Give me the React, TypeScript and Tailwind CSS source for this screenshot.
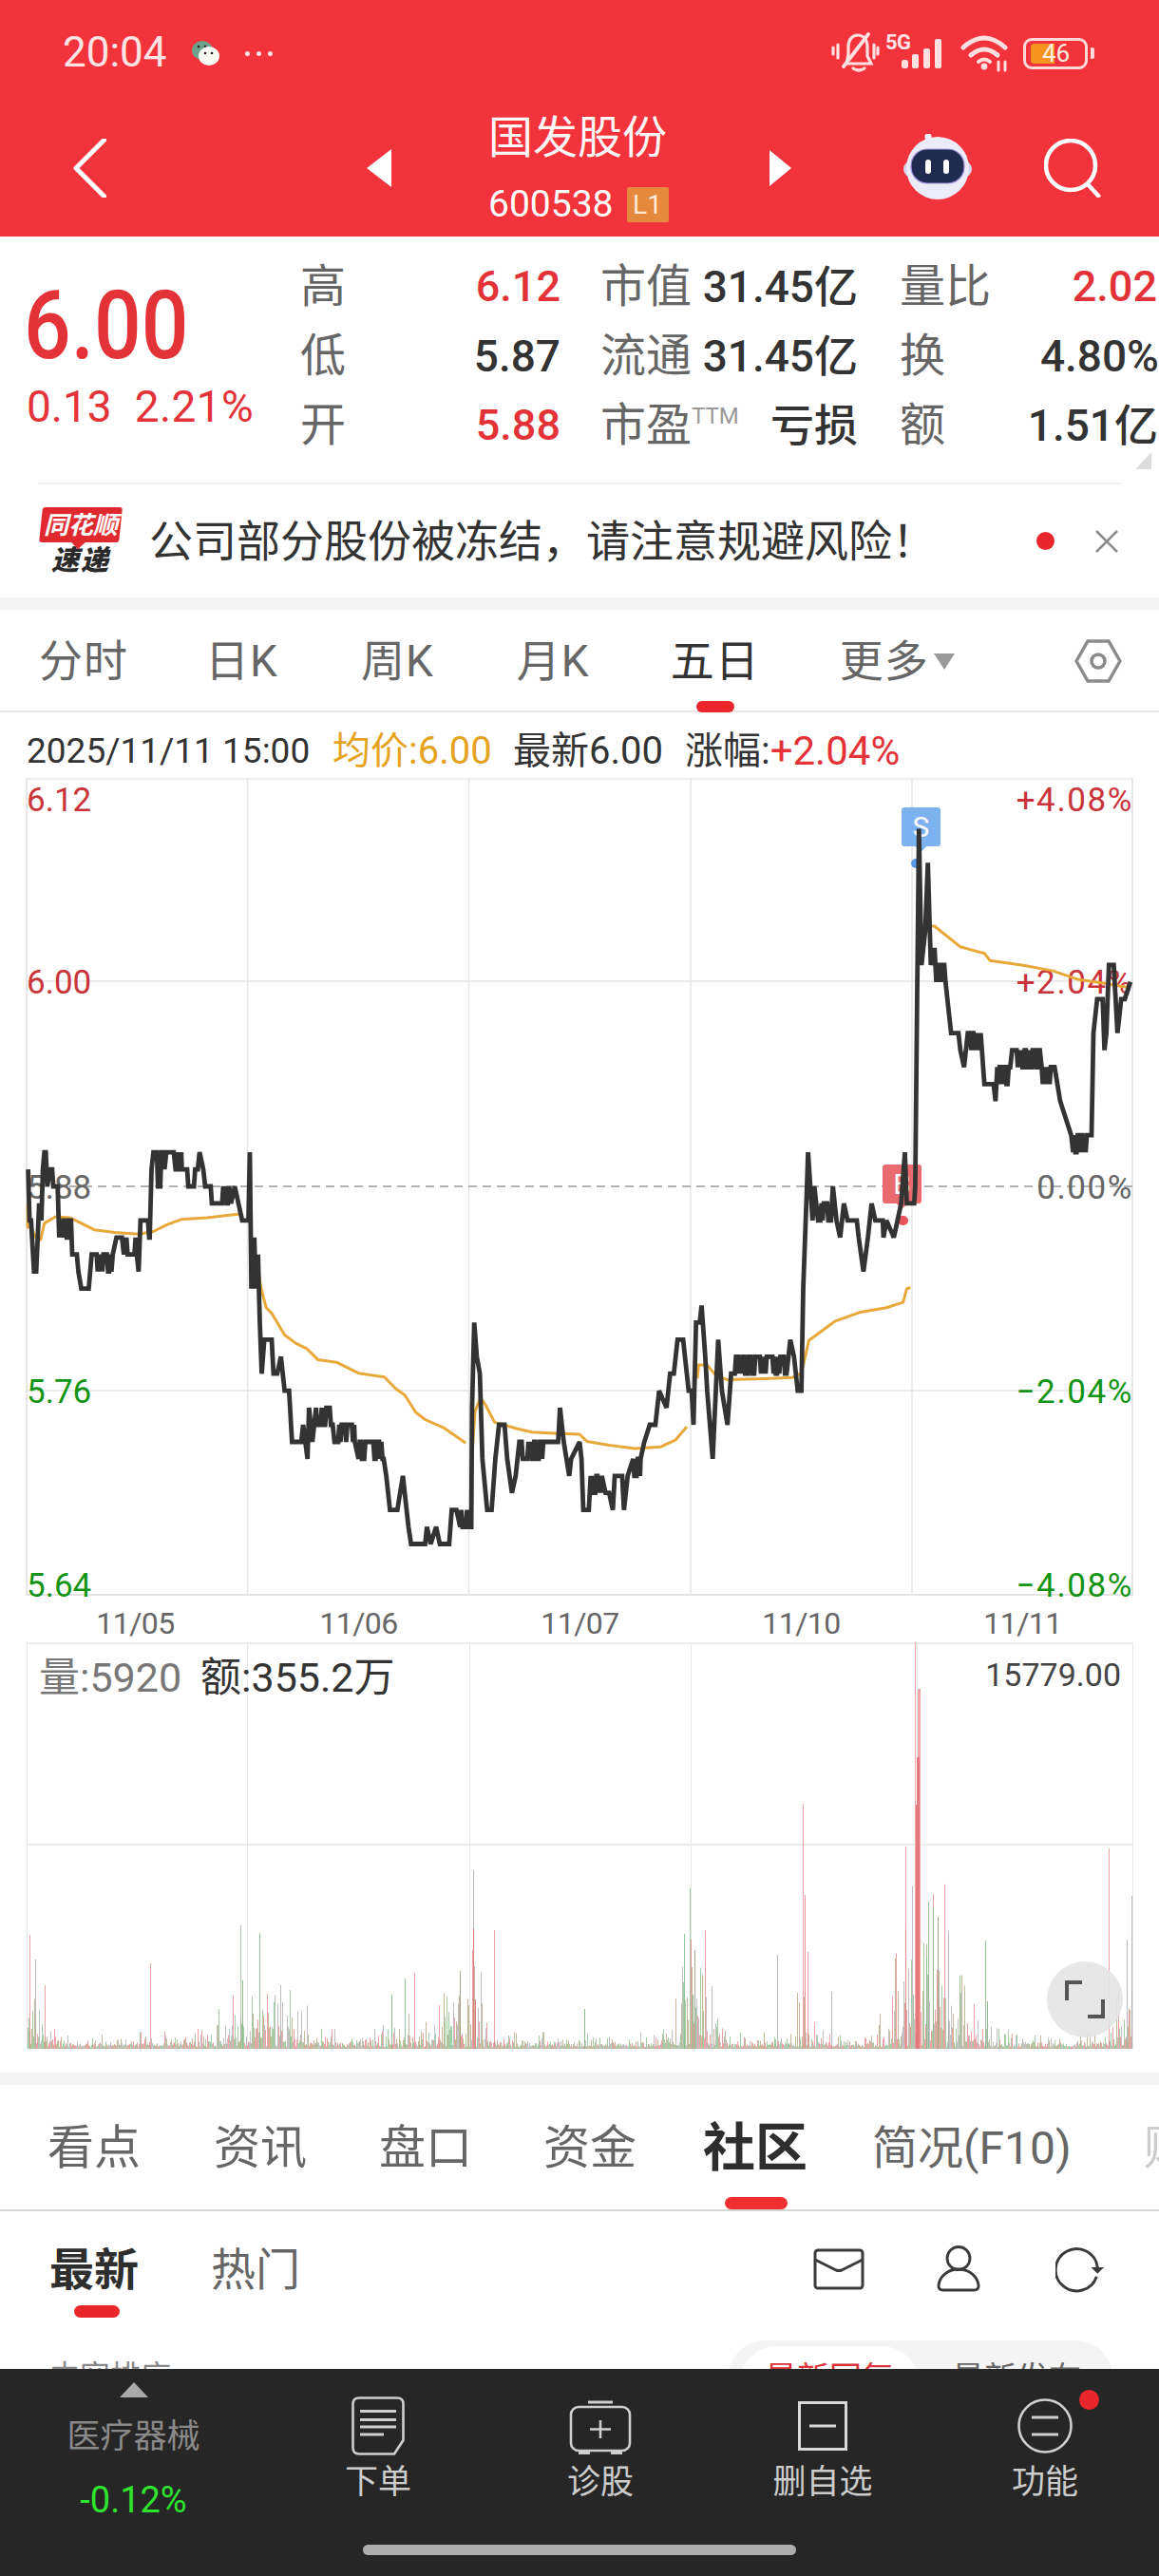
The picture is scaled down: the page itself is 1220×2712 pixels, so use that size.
import React from "react";

const FONT = "[font-family:Roboto,'Noto_Sans_CJK_SC','Noto_Sans',sans-serif]";

type K = [number, number, number?];
const P3: K[] = [
  [76,1],[80,-2],[84,-2],[92,-5],[98,-5],[102,-3],[106,-1],[112,-2],[116,1],[120,2],[124,2],[128,0],[135,1,0],[150,0],[156,0],[160,-3],[165,-2,-3],[186,-2,-4],[200,-4],[208,-4],[212,-5],[220,-6],[240,-6],[248,-4],[252,-4,-5],[305,-4],[315,-3],[330,-3],[335,-4],[342,-3,-4],[370,-4],[375,-5],[380,-2],[385,-2,-3],[405,-3],[410,1],[415,2,0],[445,1],[450,2],[470,2],[475,1,2],[492,1],[500,1,0],[530,1],[535,1],[540,2],[550,1],[555,0],[570,0,-1],[620,0],[625,-1],[635,0],[645,-1],[655,-2],[664,-2],
  [672,-2],[676,2],[680,-6],[688,-3],[692,-6],[698,-4],[703,-8],[708,-11],[715,-9],[735,-9],[740,-11],[750,-11],[760,-10],[770,-12],[782,-12],[790,-15],[805,-15],[815,-15],[820,-14],[832,-16],[836,-13],[845,-15],[855,-13,-14],[900,-14],[905,-15],[915,-15,-14],[960,-15],[970,-16,-15],[1038,-16],[1045,-17],[1055,-19],[1065,-19],[1075,-19],[1090,-17],[1100,-19],[1105,-20],[1112,-21,-21],[1150,-21],[1155,-20],[1165,-21],[1180,-20],[1190,-21],[1215,-21],[1222,-19],[1235,-19],[1245,-20,-19],[1265,-20],
  [1275,-20],[1277,-13],[1283,-8],[1290,-10],[1298,-11],[1305,-16],[1318,-19],[1330,-19],[1340,-16],[1350,-14],[1365,-14],[1372,-16],[1385,-18],[1395,-17],[1405,-15,-16],[1480,-15],[1500,-15],[1510,-15],[1515,-13],[1525,-15],[1540,-17],[1545,-16],
];
const P4: K[] = [
  [0,-15],[5,-16],[10,-19],[25,-19],[30,-17,-18],[60,-17],[70,-18],[80,-18],[90,-19],[95,-17],[115,-17],[120,-19],[130,-17],[145,-16,-17],[165,-16],[175,-15],[190,-14],[205,-14],[215,-12],[235,-13],[245,-11],[255,-11],[265,-9],[280,-9],[295,-12],[303,-12],[308,-14],[315,-8],[325,-8],[330,-7],[340,-10],[345,-12],[360,-16],[375,-9],[385,-12],[400,-14],[410,-11],[420,-11,-10],[560,-11],[570,-9],[580,-10],[590,-12],[600,-12],[605,-6],[615,0],[618,2],[630,-2],[635,0],[645,-2,-1],[680,-2],[685,0],[695,-2],[705,-3],[715,-1],[725,-2],[750,-2],[755,-3],[768,-5],[780,-3],[790,-1],[800,-2],[820,-2],[822,-3],[830,-2],[850,-3],[860,-2],[870,-1],[880,2],[885,-1],[905,-1],[908,0],[913,11],[918,21],[925,13],[935,15],[942,19],[950,13],[960,14],[965,12,13],[990,12],[1000,10],[1005,9],[1025,9],[1030,8],[1040,7],[1050,9,8],[1085,9],[1095,6],[1105,6],[1120,6],[1125,5],[1130,7,6],[1165,7],[1170,8,7],[1245,8],[1250,7,6],[1285,7],[1300,5],[1315,4],[1330,3],[1335,2,3],[1375,3],[1385,3],[1390,9],[1400,11],[1415,11],[1420,8],[1425,9],[1432,13],[1445,13],[1455,9],[1465,11],[1475,11],[1490,12],
];

function mulberry(seed: number) {
  let a = seed;
  return () => {
    a |= 0; a = (a + 0x6d2b79f5) | 0;
    let t = Math.imul(a ^ (a >>> 15), 1 | a);
    t = (t + Math.imul(t ^ (t >>> 7), 61 | t)) ^ t;
    return ((t ^ (t >>> 14)) >>> 0) / 4294967296;
  };
}

function priceLine(): string {
  const r = mulberry(7);
  const keys: K[] = [...P3, ...P4.map(([x, l, a]) => [x + 1568, l, a] as K)];
  const pts: string[] = [];
  const yOf = (l: number) => 1249 - l * 17.93;
  keys.forEach(([zx, l, alt], i) => {
    const x = zx / 2.57;
    pts.push(`${x.toFixed(1)},${yOf(l).toFixed(1)}`);
    if (alt !== undefined && i + 1 < keys.length) {
      const nx = keys[i + 1][0] / 2.57;
      let cx = x + 1.2;
      while (cx < nx - 0.5) {
        const lv = r() < 0.5 ? l : alt;
        pts.push(`${cx.toFixed(1)},${yOf(lv).toFixed(1)}`);
        cx += 1.2;
      }
    }
  });
  return pts.join(" ");
}

const AVG3: number[][][] = [
  [[75,780],[75,822],[85,822],[95,840],[110,845],[120,815],[150,803],[190,805],[220,815],[255,827],[310,832],[375,835],[415,830],[450,818],[490,808],[560,805],[650,798]],
  [[697,895],[705,930],[720,970],[735,980],[770,1020],[800,1035],[830,1045],[860,1065],[910,1070],[970,1090],[1040,1097],[1070,1118],[1095,1130],[1125,1162],[1150,1175],[1200,1190],[1260,1218]],
  [[1278,1230],[1285,1160],[1300,1135],[1315,1150],[1338,1180],[1400,1192],[1440,1198],[1500,1200],[1568,1202],[1588,1215],[1648,1222],[1718,1228],[1788,1225],[1828,1212],[1858,1188]],
  [[1886,1100],[1890,1075],[1913,1075],[1938,1095],[1968,1102],[2068,1100],[2143,1098],[2168,1090],[2188,1030],[2218,1015],[2258,995],[2328,978],[2398,970],[2443,960],[2453,935],[2463,933]],
  [[2486,340],[2493,300],[2508,270],[2528,270],[2598,308],[2663,320],[2678,333],[2768,342],[2848,352],[2918,368],[2988,375],[3058,383]],
];

const SPIKES: [number, number, string, number][] = [
  [963,1729,"#ee8f92",0.8],[967,1778,"#f2a6a8",1],[966,1850,"#e47a7e",1],[965,1900,"#e47a7e",1],[845,1899,"#ee8f92",0.8],[847,1995,"#e47a7e",0.8],[953,1944,"#e47a7e",0.7],[953,2030,"#d98a80",0.9],[1167,1946,"#e47a7e",0.7],[498,1969,"#aaaaaa",0.8],[498,2030,"#e47a7e",0.9],[520,2032,"#e47a7e",0.7],[253,2027,"#9bb89b",0.8],[273,2035,"#8ebc8e",0.9],[31,2037,"#e47a7e",0.7],[37,2063,"#aaaaaa",0.8],[47,2090,"#e47a7e",0.7],[158,2067,"#e47a7e",0.7],[436,2077,"#e47a7e",0.7],[426,2083,"#8ebc8e",0.9],[720,2036,"#8ebc8e",0.9],[731,2053,"#a09f84",0.9],[818,2058,"#aaaaaa",0.8],[850,2055,"#e47a7e",0.7],[977,2002,"#8ebc8e",0.9],[982,2008,"#8ebc8e",0.9],[987,2018,"#a09f84",0.9],[998,2033,"#aaaaaa",0.8],[1037,2043,"#8ebc8e",0.9],[1186,2042,"#aaaaaa",0.8],[1191,1996,"#aaaaaa",0.8],[1039,2107,"#8ebc8e",1],[615,2115,"#8ebc8e",1],[875,2097,"#aaaaaa",0.8],[1010,2080,"#8ebc8e",0.9],[729,2100,"#8ebc8e",1],[975,2060,"#8ebc8e",1],[255,2085,"#8ebc8e",1],[295,2090,"#aaaaaa",0.8],[305,2095,"#8ebc8e",0.8],[412,2100,"#8ebc8e",1],[484,2075,"#a09f84",0.9],[500,2105,"#e47a7e",1],
];

function envelope(x: number): number {
  const bumps: [number, number, number][] = [[30,12,20],[262,26,14],[300,20,12],[420,30,5],[478,16,20],[500,10,18],[725,12,28],[738,12,18],[845,8,14],[966,20,36],[985,20,22],[1010,24,8],[1185,10,14]];
  let e = 4;
  for (const [c, w, h] of bumps) e += h * Math.exp(-((x - c) * (x - c)) / (2 * w * w));
  return e;
}

function volumeBars() {
  const r = mulberry(21);
  const palette = ["#e47a7e", "#7fb67f", "#a6a6a6", "#a89b6e"];
  const bars: React.ReactNode[] = [];
  for (let x = 29; x < 1192; x++) {
    const h = 2 + -Math.log(Math.max(0.02, r())) * envelope(x);
    const c = palette[Math.floor(r() * 4)];
    bars.push(<line key={x} x1={x + 0.5} x2={x + 0.5} y1={2157} y2={2157 - h} stroke={c} strokeWidth={1} strokeOpacity={0.7} />);
  }
  SPIKES.forEach(([x, y, c, o], i) => {
    bars.push(<line key={`s${i}`} x1={x + 0.5} x2={x + 0.5} y1={2157} y2={y} stroke={c} strokeWidth={x >= 964 && x <= 967 ? 3 : 1} strokeOpacity={o} />);
  });
  return bars;
}

function PriceChart() {
  const line = priceLine();
  return (
    <svg className="absolute inset-0 overflow-visible" width={1165} height={861} viewBox="28 819 1165 861">
      {AVG3.map((seg, i) => (
        <polyline key={i} points={seg.map(([x, y]) => `${(x / 2.57).toFixed(1)},${(820 + y / 1.742).toFixed(1)}`).join(" ")} fill="none" stroke="#e8a83a" strokeWidth={3} strokeLinejoin="round" />
      ))}
      <polyline points={line} fill="none" stroke="#333333" strokeWidth={4.8} strokeLinejoin="miter" strokeMiterlimit={2} />
    </svg>
  );
}

function ChartGrid() {
  return (
    <svg className="absolute inset-0 overflow-visible" width={1165} height={861} viewBox="28 819 1165 861">
      {[28, 260.5, 493.5, 727, 960, 1192].map((x) => (
        <line key={x} x1={x} x2={x} y1={819} y2={1680} stroke="#e6e6e6" strokeWidth={x === 28 || x === 1192 ? 2 : 1.5} />
      ))}
      {[1033, 1464].map((y) => (
        <line key={y} x1={28} x2={1193} y1={y} y2={y} stroke="#e4e4e4" strokeWidth={1.5} />
      ))}
      <line x1={28} x2={1193} y1={820} y2={820} stroke="#e8e8e8" strokeWidth={1.5} />
      <line x1={28} x2={1193} y1={1679} y2={1679} stroke="#e4e4e4" strokeWidth={2} />
      <line x1={28} x2={1193} y1={1249} y2={1249} stroke="#999999" strokeWidth={1.5} strokeDasharray="9 6" />
    </svg>
  );
}

function StatusIcons() {
  return (
    <svg width={190} height={44} viewBox="876 34 190 44" fill="none" stroke="#ffe0e1" strokeLinecap="round">
      <path d="M889 70 L915 36" strokeWidth={3.8} />
      <path d="M892 67 h26 l-4 -8 v-10 c0 -8 -5 -12 -10 -12 c-6 0 -10 5 -10 12 v8 z" strokeWidth={3.2} />
      <path d="M899 72 q6 4 12 0" strokeWidth={3.2} />
      <path d="M878 50 v7 M883 47 v14 M921 47 v14 M925 50 v7" strokeWidth={3.2} />
      <g strokeWidth={0} fill="#ffe0e1">
        <rect x={950} y={63} width={7} height={9} rx={2.5} />
        <rect x={961} y={57} width={7} height={15} rx={2} />
        <rect x={973} y={51} width={7} height={21} rx={2} />
        <rect x={985} y={41} width={7} height={31} rx={2} />
      </g>
      <path d="M1015 50 Q1037 30 1059 50" strokeWidth={5} />
      <path d="M1023 58 Q1037 46 1051 58" strokeWidth={5} />
      <path d="M1031 65 Q1037 60 1043 65" strokeWidth={4} />
      <circle cx={1037} cy={70} r={3.4} fill="#ffe0e1" stroke="none" />
      <path d="M1052 65 v9 M1059 65 v9" strokeWidth={3} />
    </svg>
  );
}

function Robot() {
  return (
    <svg width={72} height={72} viewBox="954 142 72 72">
      <path d="M978 150 q4 -4 8 0 q2 3 2 6" stroke="#e9e7f6" strokeWidth={2.4} fill="none" />
      <circle cx={980} cy={145} r={3.6} fill="#f1effa" />
      <rect x={954} y={170} width={72} height={18} rx={9} fill="#d9d5ee" />
      <ellipse cx={990} cy={178} rx={33} ry={33} fill="#ecebf8" />
      <rect x={962} y={158} width={56} height={36} rx={17} fill="#1f2c50" stroke="#a895e0" strokeWidth={1.2} />
      <rect x={977} y={169} width={6} height={15} rx={3} fill="#ffffff" />
      <rect x={996} y={169} width={6} height={15} rx={3} fill="#ffffff" />
    </svg>
  );
}

function Logo() {
  return (
    <div className="w-[88px] h-[72px] flex flex-col items-center">
      <div className="relative w-[84px] h-[37px] bg-[#e0292e] rounded-[3px] -skew-x-[6deg] flex items-center justify-center">
        <span className="text-white text-[26px] leading-none font-bold italic whitespace-nowrap skew-x-[6deg]">同花顺</span>
        <div className="absolute left-[36px] -bottom-[5px] w-[11px] h-[11px] bg-[#e0292e] rotate-45" />
      </div>
      <span className="text-[#2a2a2a] text-[29px] leading-[32px] mt-[3px] font-black italic tracking-[2px] whitespace-nowrap">速递</span>
    </div>
  );
}

function Dark({ children }: { children: React.ReactNode }) {
  return <span className="text-[46px] font-medium text-[#333333] leading-none">{children}</span>;
}
function Red({ children }: { children: React.ReactNode }) {
  return <span className="text-[45px] font-medium text-[#e33238] leading-none">{children}</span>;
}
function Label({ children }: { children: React.ReactNode }) {
  return <span className="text-[48px] text-[#666666] leading-none whitespace-nowrap">{children}</span>;
}
function Cell({ children, className = "" }: { children: React.ReactNode; className?: string }) {
  return <div className={`flex items-center justify-between whitespace-nowrap ${className}`}>{children}</div>;
}

function BottomItem({ icon, label }: { icon: React.ReactNode; label: string }) {
  return (
    <div className="flex flex-col items-center pt-[26px]">
      <div className="h-[68px] flex items-center justify-center">{icon}</div>
      <span className="text-[35px] leading-[44px] text-[#cccccc] mt-[4px] whitespace-nowrap">{label}</span>
    </div>
  );
}

export default function App() {
  return (
    <div className={`${FONT} w-[1220px] h-[2712px] bg-white overflow-hidden flex flex-col`}>
      {/* header */}
      <header className="h-[249px] bg-[#f2333b] shrink-0 text-white">
        <div className="h-[110px] flex items-center pt-[2px] pl-[66px]">
          <span className="text-[44px] leading-none text-[#ffe3e4] w-[122px] mt-[-2px]">20:04</span>
          <svg width={30} height={28} viewBox="0 0 30 28" className="ml-[14px]">
            <ellipse cx={11} cy={11} rx={11} ry={10} fill="#6ea18d" />
            <circle cx={7} cy={7} r={1.3} fill="#222" />
            <circle cx={14} cy={7} r={1.3} fill="#222" />
            <ellipse cx={18} cy={17} rx={11} ry={10} fill="#fbfbf5" />
            <circle cx={14} cy={14} r={1.3} fill="#222" />
            <circle cx={21} cy={14} r={1.3} fill="#222" />
          </svg>
          <div className="flex gap-[7px] ml-[26px]">
            <div className="w-[5px] h-[5px] rounded-full bg-[#ffe3e4]" />
            <div className="w-[5px] h-[5px] rounded-full bg-[#ffe3e4]" />
            <div className="w-[5px] h-[5px] rounded-full bg-[#ffe3e4]" />
          </div>
          <div className="relative ml-[588px] w-[190px] h-[44px]">
            <StatusIcons />
            <span className="absolute left-[57px] top-[0px] text-[22px] leading-[22px] font-bold text-[#ffe3e4] tracking-[-0.5px]">5G</span>
          </div>
          <div className="relative ml-[12px] w-[68px] h-[33px] border-[3px] border-[#ffd9da] rounded-[9px] flex items-center pl-[5px]">
            <div className="w-[25px] h-[21px] bg-[#f5951f] rounded-l-[4px]" />
            <span className="absolute left-[17px] top-[0px] text-[26px] leading-[27px] text-[#ffeede]">46</span>
          </div>
          <div className="ml-[3px] w-[4px] h-[12px] bg-[#ffd9da] rounded-r-[2px]" />
        </div>
        <div className="h-[134px] flex items-center pl-[77px]">
          <svg width={35} height={62} viewBox="0 0 35 62" fill="none" stroke="white" strokeWidth={5}>
            <path d="M33 1 L3 31 L33 61" strokeLinecap="round" strokeLinejoin="round" />
          </svg>
          <div className="ml-[274px] w-0 h-0 border-y-[20px] border-y-transparent border-r-[26px] border-r-white" />
          <div className="ml-[102px] w-[190px] flex flex-col">
            <span className="text-[47px] leading-[48px] whitespace-nowrap text-[#fff7f7]">国发股份</span>
            <div className="flex items-center mt-[28px] h-[37px]">
              <span className="text-[39px] leading-none">600538</span>
              <span className="ml-[14px] w-[44px] h-[37px] bg-[#e58a3c] rounded-[2px] text-[28px] leading-[37px] text-center text-[#ffe9d6]">L1</span>
            </div>
          </div>
          <div className="ml-[106px] w-0 h-0 border-y-[19px] border-y-transparent border-l-[23px] border-l-white" />
          <div className="ml-[118px]"><Robot /></div>
          <svg className="ml-[76px]" width={60} height={62} viewBox="0 0 60 62" fill="none" stroke="white" strokeWidth={4.5}>
            <circle cx={28} cy={28} r={26} />
            <path d="M46 48 L57 60" strokeLinecap="square" />
          </svg>
        </div>
      </header>

      {/* quote */}
      <section className="h-[261px] shrink-0 relative flex">
        <div className="w-[316px] pl-[28px] shrink-0">
          <div className="h-[119px] mt-[34px] -ml-[3px] text-[100px] leading-[119px] font-medium text-[#e33238] origin-left scale-x-[0.875]">6.00</div>
          <div className="flex mt-[1px] text-[46px] leading-[50px] text-[#e33238]">
            <span>0.13</span>
            <span className="ml-[24px] tracking-[0.4px]">2.21%</span>
          </div>
        </div>
        <div className="flex-1 pt-[16px] grid grid-cols-[274px_313px_317px] auto-rows-[73px]">
          <Cell><Label>高</Label><Red>6.12</Red></Cell>
          <Cell className="ml-[42px]"><Label>市值</Label><Dark>31.45亿</Dark></Cell>
          <Cell className="ml-[44px] pr-[2px]"><Label>量比</Label><Red>2.02</Red></Cell>
          <Cell><Label>低</Label><Dark>5.87</Dark></Cell>
          <Cell className="ml-[42px]"><Label>流通</Label><Dark>31.45亿</Dark></Cell>
          <Cell className="ml-[44px]"><Label>换</Label><Dark>4.80%</Dark></Cell>
          <Cell><Label>开</Label><Red>5.88</Red></Cell>
          <Cell className="ml-[42px]">
            <span className="flex items-start">
              <Label>市盈</Label>
              <span className="text-[24px] leading-none text-[#999999] mt-[2px]">TTM</span>
            </span>
            <Dark>亏损</Dark>
          </Cell>
          <Cell className="ml-[44px] pr-[1px]"><Label>额</Label><Dark>1.51亿</Dark></Cell>
        </div>
        <div className="absolute right-[8px] bottom-[16px] w-0 h-0 border-b-[18px] border-b-[#dddddd] border-l-[17px] border-l-transparent" />
        <div className="absolute left-[40px] right-[40px] bottom-0 h-[2px] bg-[#eeeeee]" />
      </section>

      {/* notice */}
      <section className="h-[119px] shrink-0 flex items-center pl-[41px]">
        <Logo />
        <span className="ml-[28px] text-[46px] leading-none text-[#333333] whitespace-nowrap w-[934px]">公司部分股份被冻结，请注意规避风险！</span>
        <div className="w-[19px] h-[19px] rounded-full bg-[#e8262c]" />
        <svg className="ml-[42px]" width={26} height={26} viewBox="0 0 26 26" stroke="#8c8c8c" strokeWidth={2.5}>
          <path d="M2 2 L24 24 M24 2 L2 24" />
        </svg>
      </section>

      <div className="h-[13px] shrink-0 bg-[#f5f5f5]" />

      {/* period tabs */}
      <section className="h-[108px] shrink-0 relative flex items-center pl-[41px] border-b-2 border-[#e8e8e8] text-[46px] leading-none text-[#666666] tracking-[1px] pt-[2px]">
        <span>分时</span>
        <span className="ml-[81px]">日K</span>
        <span className="ml-[87px]">周K</span>
        <span className="ml-[87px]">月K</span>
        <span className="ml-[85px] text-[#333333]">五日</span>
        <span className="ml-[84px]">更多</span>
        <div className="ml-[5px] w-0 h-0 border-x-[11px] border-x-transparent border-t-[17px] border-t-[#9a9a9a]" />
        <svg className="ml-[126px]" width={50} height={48} viewBox="0 0 50 48" fill="none" stroke="#8a8a8a" strokeWidth={3.5} strokeLinejoin="round">
          <path d="M14 3 H36 L48 24 L36 45 H14 L2 24 Z" />
          <circle cx={25} cy={24} r={7} />
        </svg>
        <div className="absolute left-[733px] -bottom-[2px] w-[40px] h-[12px] rounded-[6px] bg-[#e8262c]" />
      </section>

      {/* info */}
      <section className="h-[69px] shrink-0 flex items-center pl-[28px] pt-[12px] text-[40px] leading-none whitespace-nowrap">
        <span className="text-[#333333] text-[37px] w-[322px]">2025/11/11 15:00</span>
        <span className="text-[#e5a31f] w-[190px]">均价:6.00</span>
        <span className="text-[#333333] w-[181px]">最新6.00</span>
        <span className="text-[#333333]">涨幅:</span>
        <span className="text-[#e33238] text-[42px]">+2.04%</span>
      </section>

      {/* price chart */}
      <section className="relative h-[861px] shrink-0 ml-[28px] w-[1165px] text-[35px] leading-[40px]">
        <ChartGrid />
        <span className="absolute left-0 top-[4px] text-[#c9343a]">6.12</span>
        <span className="absolute left-0 top-[196px] text-[#c9343a]">6.00</span>
        <span className="absolute left-0 top-[412px] text-[#666666]">5.88</span>
        <span className="absolute left-0 top-[627px] text-[#149414]">5.76</span>
        <span className="absolute left-0 top-[831px] text-[#149414]">5.64</span>
        <span className="absolute right-0 top-[4px] text-[#c9343a] tracking-[1.6px]">+4.08%</span>
        <span className="absolute right-0 top-[196px] text-[#c9343a] tracking-[1.6px]">+2.04%</span>
        <span className="absolute right-0 top-[412px] text-[#666666] tracking-[1.6px]">0.00%</span>
        <span className="absolute right-0 top-[627px] text-[#149414] tracking-[1.6px]">−2.04%</span>
        <span className="absolute right-0 top-[831px] text-[#149414] tracking-[1.6px]">−4.08%</span>

        <div className="absolute left-[921px] top-[31px] w-[41px] h-[41px] bg-[#7db2f0] rounded-[3px] text-white text-[30px] leading-[41px] text-center">
          S
          <div className="absolute left-[16px] -bottom-[4px] w-[9px] h-[9px] bg-[#7db2f0] rotate-45" />
        </div>
        <div className="absolute left-[931px] top-[85px] w-[11px] h-[10px] rounded-full bg-[#5a9ae6]" />
        <div className="absolute left-[901px] top-[407px] w-[41px] h-[41px] bg-[#e96b6f] rounded-[3px] text-white text-[30px] leading-[41px] text-center">
          B
          <div className="absolute left-[16px] -bottom-[4px] w-[9px] h-[9px] bg-[#e96b6f] rotate-45" />
        </div>
        <div className="absolute left-[917px] top-[461px] w-[11px] h-[10px] rounded-full bg-[#e8555a]" />
        <PriceChart />
      </section>

      {/* date axis */}
      <section className="h-[49px] shrink-0 ml-[28px] w-[1165px] grid grid-cols-5 text-center text-[32px] leading-[59px] text-[#666666] tracking-[-0.5px]">
        <span className="pr-[4px]">11/05</span>
        <span>11/06</span>
        <span>11/07</span>
        <span>11/10</span>
        <span>11/11</span>
      </section>

      {/* volume */}
      <section className="relative h-[428px] shrink-0 ml-[28px] w-[1165px]">
        <svg className="absolute inset-0" width={1165} height={428} viewBox="28 1729 1165 428">
          {[28.5, 260.5, 494.5, 727.5, 965.5, 1192.5].map((x) => (
            <line key={x} x1={x} x2={x} y1={1729} y2={2157} stroke="#e6e6e6" strokeWidth={1} />
          ))}
          <line x1={28} x2={1193} y1={1730} y2={1730} stroke="#ececec" strokeWidth={2.5} />
          <line x1={28} x2={1193} y1={1942} y2={1942} stroke="#ececec" strokeWidth={2.5} />
          {volumeBars()}
        </svg>
        <div className="absolute left-[13px] top-[15px] flex items-center text-[43px] leading-[44px] whitespace-nowrap">
          <span className="text-[#777777]">量:5920</span>
          <span className="text-[#333333] ml-[20px]">额:355.2万</span>
        </div>
        <span className="absolute right-[13px] top-[14px] text-[34px] leading-[40px] text-[#444444]">15779.00</span>
        <div className="absolute left-[1074px] top-[336px] w-[80px] h-[80px] rounded-full bg-[#e4e4e4]/90 flex items-center justify-center">
          <svg width={44} height={42} viewBox="0 0 44 42" fill="none" stroke="#555555" strokeWidth={4}>
            <path d="M19 3 H3 V22" />
            <path d="M25 39 H41 V21" />
          </svg>
        </div>
      </section>

      <div className="h-[25px] shrink-0" />
      <div className="h-[13px] shrink-0 bg-[#f5f5f5]" />

      {/* detail tabs */}
      <section className="h-[133px] shrink-0 relative flex items-center pl-[50px] pt-[2px] border-b-2 border-[#d5d5d5] text-[49px] leading-none text-[#666666] whitespace-nowrap overflow-hidden">
        <span>看点</span>
        <span className="ml-[77px]">资讯</span>
        <span className="ml-[76px]">盘口</span>
        <span className="ml-[75px]">资金</span>
        <span className="ml-[70px] text-[55px] font-bold text-[#2e2e2e]">社区</span>
        <span className="ml-[68px] text-[48px]">简况(F10)</span>
        <span className="ml-[76px] text-[#cccccc]">财务</span>
        <div className="absolute left-[763px] bottom-0 w-[66px] h-[13px] rounded-[7px] bg-[#f03030]" />
      </section>

      {/* community */}
      <section className="relative h-[166px] shrink-0 overflow-hidden">
        <div className="h-[118px] flex items-center pl-[52px] pt-[4px]">
          <span className="text-[47px] leading-none font-bold text-[#2e2e2e]">最新</span>
          <span className="ml-[76px] text-[47px] leading-none text-[#666666]">热门</span>
          <svg className="ml-[540px]" width={54} height={46} viewBox="0 0 54 46" fill="none" stroke="#3a3a3a" strokeWidth={3} strokeLinejoin="round">
            <rect x={2} y={3} width={50} height={40} rx={3} />
            <path d="M2 13 L24 24 Q27 25 30 24 L52 13" />
          </svg>
          <svg className="ml-[76px]" width={46} height={50} viewBox="0 0 48 52" fill="none" stroke="#3a3a3a" strokeWidth={3} strokeLinejoin="round">
            <circle cx={24} cy={14} r={12.5} />
            <path d="M24 26 C12 26 3 34 2 44 Q2 49 7 49 H41 Q46 49 46 44 C45 34 36 26 24 26 Z" />
          </svg>
          <svg className="ml-[79px]" width={52} height={50} viewBox="0 0 54 52" fill="none" stroke="#3a3a3a" strokeWidth={3}>
            <path d="M46 24 A23 23 0 1 0 45 34" />
            <path d="M39 24 H53 L46 31 Z" fill="#3a3a3a" stroke="none" />
          </svg>
        </div>
        <div className="absolute left-[78px] top-[99px] w-[48px] h-[13px] rounded-[7px] bg-[#e8262c]" />
        <div className="mt-[18px] flex pl-[52px] pr-[48px] justify-between">
          <span className="text-[32px] leading-[40px] text-[#888888] mt-[18px] whitespace-nowrap">内容排序</span>
          <div className="w-[406px] h-[80px] rounded-[40px] bg-[#f4f4f4] flex pl-[12px] pt-[6px]">
            <div className="w-[190px] h-[70px] rounded-t-[40px] bg-white text-center text-[34px] leading-[48px] pt-[10px] text-[#d8343a]">最新回复</div>
            <div className="flex-1 text-center text-[34px] leading-[48px] pt-[10px] text-[#666666]">最新发布</div>
          </div>
        </div>
      </section>

      {/* bottom bar */}
      <footer className="h-[218px] shrink-0 bg-[#262626] flex flex-col">
        <div className="h-[168px] grid grid-cols-[281px_234px_234px_234px_234px]">
          <div className="flex flex-col items-center pt-[14px]">
            <div className="w-0 h-0 border-x-[15px] border-x-transparent border-b-[16px] border-b-[#aaaaaa]" />
            <span className="text-[35px] leading-[44px] text-[#8a8a8a] mt-[20px] whitespace-nowrap">医疗器械</span>
            <span className="text-[38px] leading-[44px] text-[#2ee42e] mt-[22px]">-0.12%</span>
          </div>
          <BottomItem
            label="下单"
            icon={
              <svg width={56} height={62} viewBox="0 0 56 62" fill="none" stroke="#cfcfcf" strokeWidth={2.6}>
                <path d="M8 1.5 H48 Q54.5 1.5 54.5 8 V46 L45 60.5 H8 Q1.5 60.5 1.5 54 V8 Q1.5 1.5 8 1.5 Z" />
                <path d="M9 15.5 H47 M9 24.5 H47 M9 32 H47 M9 40 H34" strokeWidth={3} />
              </svg>
            }
          />
          <BottomItem
            label="诊股"
            icon={
              <svg className="mt-[4px]" width={66} height={58} viewBox="0 0 66 58" fill="none" stroke="#cfcfcf" strokeWidth={2.6}>
                <path d="M20 2 H46" strokeWidth={3} />
                <rect x={2} y={7} width={62} height={46} rx={8} />
                <path d="M33 21 V40 M22 30.5 H44" />
                <path d="M10 54 H22 V57 H10 Z M44 54 H56 V57 H44 Z" fill="#cfcfcf" stroke="none" />
              </svg>
            }
          />
          <BottomItem
            label="删自选"
            icon={
              <svg width={52} height={52} viewBox="0 0 52 52" fill="none" stroke="#d8d8d8" strokeWidth={3}>
                <rect x={1.5} y={1.5} width={49} height={49} />
                <path d="M12 26 H40" />
              </svg>
            }
          />
          <BottomItem
            label="功能"
            icon={
              <div className="relative">
                <svg width={58} height={58} viewBox="0 0 58 58" fill="none" stroke="#cfcfcf" strokeWidth={2.6}>
                  <circle cx={29} cy={29} r={27.5} />
                  <path d="M15 20 H43 M15 38 H43" strokeWidth={3} />
                </svg>
                <div className="absolute -right-[28px] -top-[9px] w-[21px] h-[21px] rounded-full bg-[#e8262c]" />
              </div>
            }
          />
        </div>
        <div className="h-[50px] flex justify-center pt-[17px]">
          <div className="w-[456px] h-[11px] rounded-[6px] bg-[#adadad]" />
        </div>
      </footer>
    </div>
  );
}
